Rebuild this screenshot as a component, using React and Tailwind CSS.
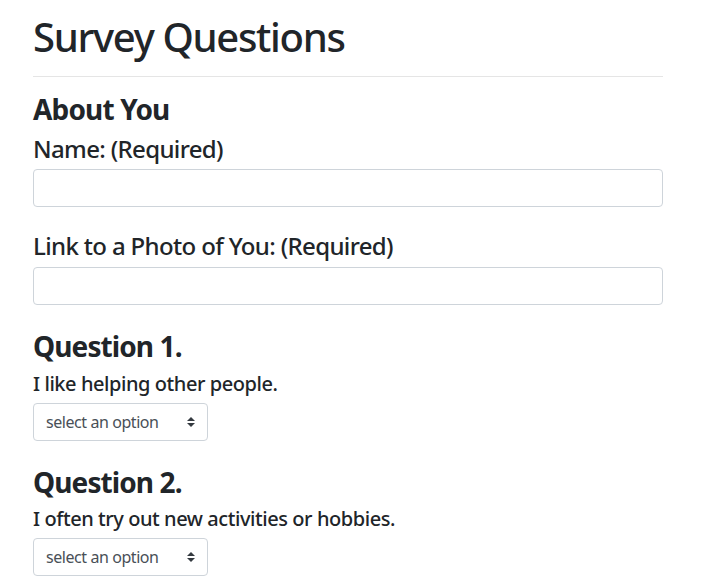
import React from 'react';

const questions = [
  { id: 1, text: 'I like helping other people.' },
  { id: 2, text: 'I often try out new activities or hobbies.' },
];

function TextField({ label }) {
  return (
    <div className="mb-[25px]">
      <h4 className="text-[24px] font-medium leading-[1.2] tracking-[-0.027em] mb-[6px]">{label}</h4>
      <input
        type="text"
        className="block w-full h-[38px] px-3 rounded border border-[#ced4da] bg-white text-base text-[#495057] outline-none"
      />
    </div>
  );
}

function SelectBox() {
  return (
    <div className="relative w-[175px]">
      <select
        defaultValue=""
        className="block w-full h-[38px] pl-3 pr-7 rounded border border-[#ced4da] bg-white text-base tracking-[-0.027em] text-[#495057] appearance-none outline-none"
      >
        <option value="">select an option</option>
        <option value="1">1 (Strongly Disagree)</option>
        <option value="5">5 (Strongly Agree)</option>
      </select>
      {/* double chevron, bootstrap custom-select style */}
      <svg
        className="absolute right-[13px] top-[14px] pointer-events-none"
        width="8"
        height="10"
        viewBox="0 0 4 5"
      >
        <path d="M2 0L0 2h4zm0 5L0 3h4z" fill="#343a40" />
      </svg>
    </div>
  );
}

export default function App() {
  return (
    <div className="min-h-screen bg-white text-[#212529] tracking-[-0.027em] font-['Noto_Sans',sans-serif]">
      <div className="ml-[33px] w-[630px] pt-[13px]">
        <h1 className="text-[40px] font-medium leading-[1.2] tracking-[-0.033em]">Survey Questions</h1>
        <hr className="mt-[15px] mb-4 border-t border-black/10" />

        <h3 className="text-[28px] font-bold leading-[1.2] tracking-[-0.03em] mb-2">About You</h3>
        <TextField label="Name: (Required)" />
        <TextField label="Link to a Photo of You: (Required)" />

        {questions.map((q) => (
          <div key={q.id} className="mb-[25px]">
            <h3 className="text-[28px] font-bold leading-[1.2] tracking-[-0.032em] mb-2">Question {q.id}.</h3>
            <h5 className="text-[20px] font-medium leading-[1.2] mb-[7px]">{q.text}</h5>
            <SelectBox />
          </div>
        ))}
      </div>
    </div>
  );
}
